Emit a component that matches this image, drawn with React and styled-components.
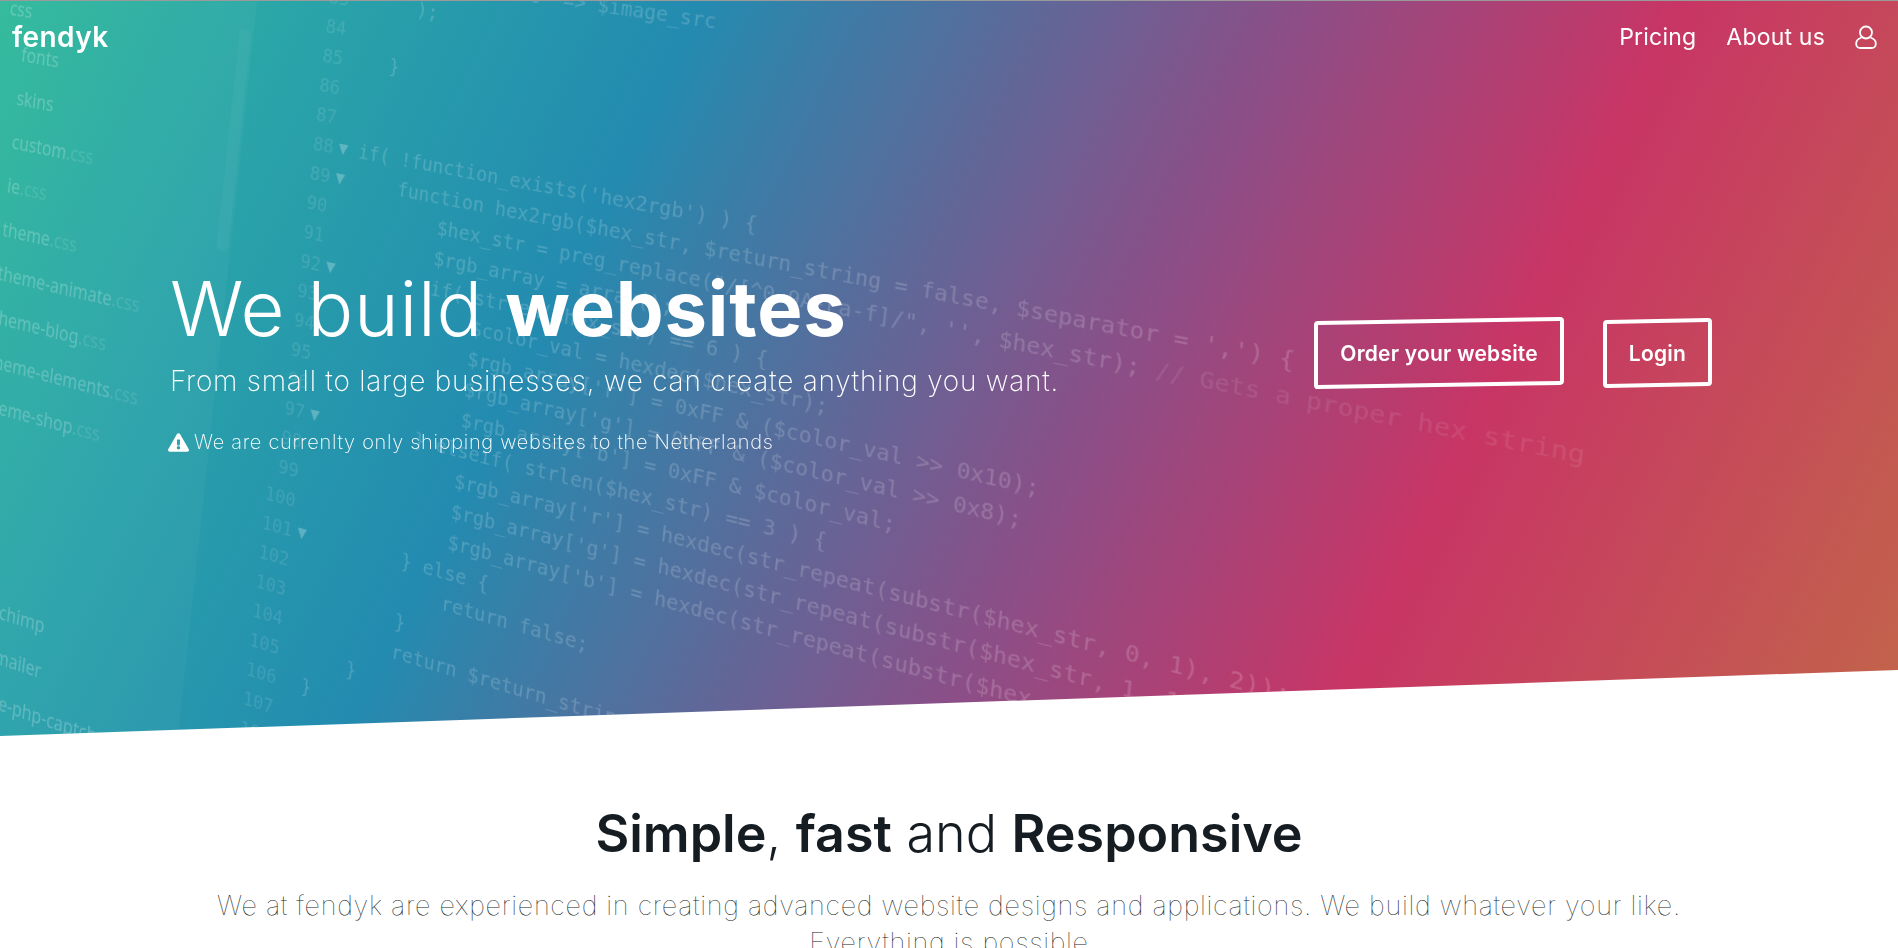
import styled, { createGlobalStyle } from 'styled-components';
import { FaExclamationTriangle } from 'react-icons/fa';

const TOP_FILES = [
  ['css', '', -22],
  ['fonts', ''],
  ['skins', ''],
  ['custom', '.css'],
  ['ie', '.css'],
  ['theme', '.css'],
  ['theme-animate', '.css'],
  ['theme-blog', '.css'],
  ['theme-elements', '.css'],
  ['theme-shop', '.css'],
];

const BOTTOM_FILES = [
  ['chimp', 50],
  ['mailer', 50],
  ['e-php-captcha', 62],
];

const CODE = [
  [80, `              'class' => 'img_code'],`],
  [81, ''],
  [82, `           'src' => $image_src`],
  [83, `    );`],
  [84, ''],
  [85, `  }`],
  [86, ''],
  [87, ''],
  [88, `if( !function_exists('hex2rgb') ) {`, true],
  [89, `    function hex2rgb($hex_str, $return_string = false, $separator = ',') {`, true],
  [90, `        $hex_str = preg_replace("/[^0-9A-Fa-f]/", '', $hex_str);`, false, ` // Gets a proper hex string`],
  [91, `        $rgb_array = array();`],
  [92, `        if( strlen($hex_str) == 6 ) {`, true],
  [93, `            $color_val = hexdec($hex_str);`],
  [94, `            $rgb_array['r'] = 0xFF & ($color_val >> 0x10);`],
  [95, `            $rgb_array['g'] = 0xFF & ($color_val >> 0x8);`],
  [96, `            $rgb_array['b'] = 0xFF & $color_val;`],
  [97, `        } elseif( strlen($hex_str) == 3 ) {`, true],
  [98, `            $rgb_array['r'] = hexdec(str_repeat(substr($hex_str, 0, 1), 2));`],
  [99, `            $rgb_array['g'] = hexdec(str_repeat(substr($hex_str, 1, 1), 2));`],
  [100, `            $rgb_array['b'] = hexdec(str_repeat(substr($hex_str, 2, 1), 2));`],
  [101, `        } else {`, true],
  [102, `            return false;`],
  [103, `        }`],
  [104, `        return $return_string ? implode($separator, $rgb_array) : $rgb_array;`],
  [105, `    }`],
  [106, `}`],
  [107, ''],
  [108, ''],
];

const App = () => (
  <>
    <GlobalStyle />
    <Page>
      <Hero>
        <Editor aria-hidden="true">
          <Sidebar>
            {TOP_FILES.map(([name, ext, indent]) => (
              <FileRow key={name} $indent={indent}>
                {name}
                <FileExt>{ext}</FileExt>
              </FileRow>
            ))}
            <FileGap />
            {BOTTOM_FILES.map(([name, indent]) => (
              <FileRow key={name} $indent={indent}>
                {name}
              </FileRow>
            ))}
          </Sidebar>
          <CodePane>
            {CODE.map(([num, text, fold, comment]) => (
              <CodeLine key={num}>
                <LineNum>{num}</LineNum>
                <Fold>{fold ? '▼' : ''}</Fold>
                <span>{text}</span>
                {comment && <Comment>{comment}</Comment>}
              </CodeLine>
            ))}
          </CodePane>
        </Editor>

        <Nav>
          <Logo>fendyk</Logo>
          <NavLinks>
            <NavLink>Pricing</NavLink>
            <NavLink>About us</NavLink>
            <UserIcon viewBox="0 0 22 24">
              <circle cx="11" cy="7.500" r="6" />
              <path d="M6.500 12.500C3.500 13.500 1.200 15.500 1.200 18.500v.5c0 2.400 1.800 4 4 4h11.600c2.200 0 4-1.600 4-4v-.5c0-3-2.300-5-5.300-6" />
            </UserIcon>
          </NavLinks>
        </Nav>

        <HeroBody>
          <div>
            <Title>
              We build <strong>websites</strong>
            </Title>
            <Subtitle>From small to large businesses, we can create anything you want.</Subtitle>
            <Notice>
              <FaExclamationTriangle />
              <span>We are currenlty only shipping websites to the Netherlands</span>
            </Notice>
          </div>
          <Actions>
            <SkewButton>Order your website</SkewButton>
            <SkewButton>Login</SkewButton>
          </Actions>
        </HeroBody>
      </Hero>

      <Intro>
        <Heading>
          <strong>Simple</strong>, <strong>fast</strong> and <strong>Responsive</strong>
        </Heading>
        <Lead>
          We at fendyk are experienced in creating advanced website designs and applications. We
          build whatever your like.
          <br />
          Everything is possible
        </Lead>
      </Intro>
    </Page>
  </>
);

const GlobalStyle = createGlobalStyle`
  html, body {
    margin: 0;
    padding: 0;
    height: 948px;
    overflow: hidden;
    background: #fff;
  }
`;

const Page = styled.div`
  width: 1898px;
  height: 948px;
  overflow: hidden;
  font-family: Inter, "Liberation Sans", sans-serif;
`;

const Hero = styled.header`
  position: relative;
  height: 736px;
  overflow: hidden;
  color: #fff;
  border-top: 1px solid #9a9a9a;
  box-sizing: border-box;
  clip-path: polygon(0 0, 100% 0, 100% 670px, 0 100%);
  background: linear-gradient(
    116deg,
    #2eb99a 0%,
    #2aa5a8 13%,
    #238bb0 31%,
    #8a4f88 57%,
    #c83565 74.5%,
    #c2654a 100%
  );
`;

/* the code screenshot behind the hero, one tilted plane in perspective */
const Editor = styled.div`
  position: absolute;
  top: 0;
  left: 0;
  display: flex;
  width: 1900px;
  transform-origin: 0 0;
  transform: matrix3d(
    0.784, 0.1275, 0, -0.0002,
    -0.1053, 0.978, 0, 0,
    0, 0, 1, 0,
    104, -146, 0, 1.06
  );
  color: rgba(255, 255, 255, 0.19);
  filter: blur(0.6px);
`;

const Sidebar = styled.div`
  position: relative;
  flex: 0 0 337px;
  height: 1200px;
  margin-left: -120px;
  padding: 145px 0 0 46px;
  box-sizing: border-box;
  background: rgba(255, 255, 255, 0.035);
  font: 21px/48px "Noto Sans", sans-serif;
  color: rgba(255, 255, 255, 0.24);
  &::after {
    content: '';
    position: absolute;
    top: 151px;
    left: 320px;
    width: 14px;
    height: 232px;
    border-radius: 7px;
    background: rgba(255, 255, 255, 0.035);
  }
`;

const FileRow = styled.div`
  height: 48px;
  margin-left: ${(p) => p.$indent || 0}px;
  white-space: nowrap;
`;

const FileGap = styled.div`
  height: 168px;
`;

const FileExt = styled.span`
  opacity: 0.5;
`;

const CodePane = styled.div`
  padding-left: 72px;
  font: 20px/30px "DejaVu Sans Mono", monospace;
`;

const CodeLine = styled.div`
  display: flex;
  height: 30px;
  white-space: pre;
`;

const LineNum = styled.span`
  width: 36px;
  text-align: right;
  opacity: 0.65;
`;

const Fold = styled.span`
  width: 29px;
  padding-left: 6px;
  box-sizing: border-box;
  font-size: 18px;
  color: rgba(255, 255, 255, 0.26);
`;

const Comment = styled.span`
  opacity: 0.55;
`;

const Nav = styled.nav`
  position: relative;
  display: flex;
  align-items: center;
  justify-content: space-between;
  padding: 16px 21px 0 12px;
`;

const Logo = styled.div`
  font-size: 28px;
  font-weight: 600;
  line-height: 40px;
  letter-spacing: 0.4px;
`;

const NavLinks = styled.div`
  display: flex;
  align-items: center;
  gap: 30px;
`;

const NavLink = styled.a`
  font-size: 23px;
  line-height: 40px;
  letter-spacing: 0.2px;
`;

const UserIcon = styled.svg`
  width: 22px;
  height: 24px;
  fill: none;
  stroke: #fff;
  stroke-width: 1.8;
`;

const HeroBody = styled.div`
  position: relative;
  display: flex;
  justify-content: space-between;
  align-items: center;
  padding: 203px 186px 0 170px;
`;

const Title = styled.h1`
  margin: 0;
  font-size: 76px;
  line-height: 96px;
  font-weight: 300;
  letter-spacing: 0.8px;
  strong {
    font-weight: 700;
  }
`;

const Subtitle = styled.p`
  margin: 5px 0 0;
  font-size: 28px;
  line-height: 40px;
  font-weight: 250;
  letter-spacing: 0.75px;
`;

const Notice = styled.p`
  display: flex;
  align-items: center;
  gap: 5px;
  margin: 26px 0 0 -2px;
  font-size: 20px;
  line-height: 30px;
  font-weight: 200;
  letter-spacing: 0.7px;
  svg {
    width: 21px;
    height: 19px;
  }
`;

const Actions = styled.div`
  display: flex;
  gap: 39px;
  margin-bottom: 11px;
`;

const SkewButton = styled.button`
  position: relative;
  padding: 0 26px;
  height: 68px;
  border: 0;
  background: none;
  color: #fff;
  font: 600 21px Inter, sans-serif;
  letter-spacing: 0.2px;
  &::before {
    content: '';
    position: absolute;
    inset: 0;
    border: 4px solid #fff;
    border-radius: 4px;
    transform: skewY(-1deg);
  }
`;

const Intro = styled.section`
  padding: 66px 200px 0;
  text-align: center;
  color: #151c22;
`;

const Heading = styled.h2`
  margin: 0;
  font-size: 52px;
  line-height: 64px;
  font-weight: 300;
  strong {
    font-weight: 600;
  }
`;

const Lead = styled.p`
  margin: 21px 0 0;
  font-size: 27px;
  line-height: 37px;
  font-weight: 120;
  letter-spacing: 0.7px;
`;

export default App;
